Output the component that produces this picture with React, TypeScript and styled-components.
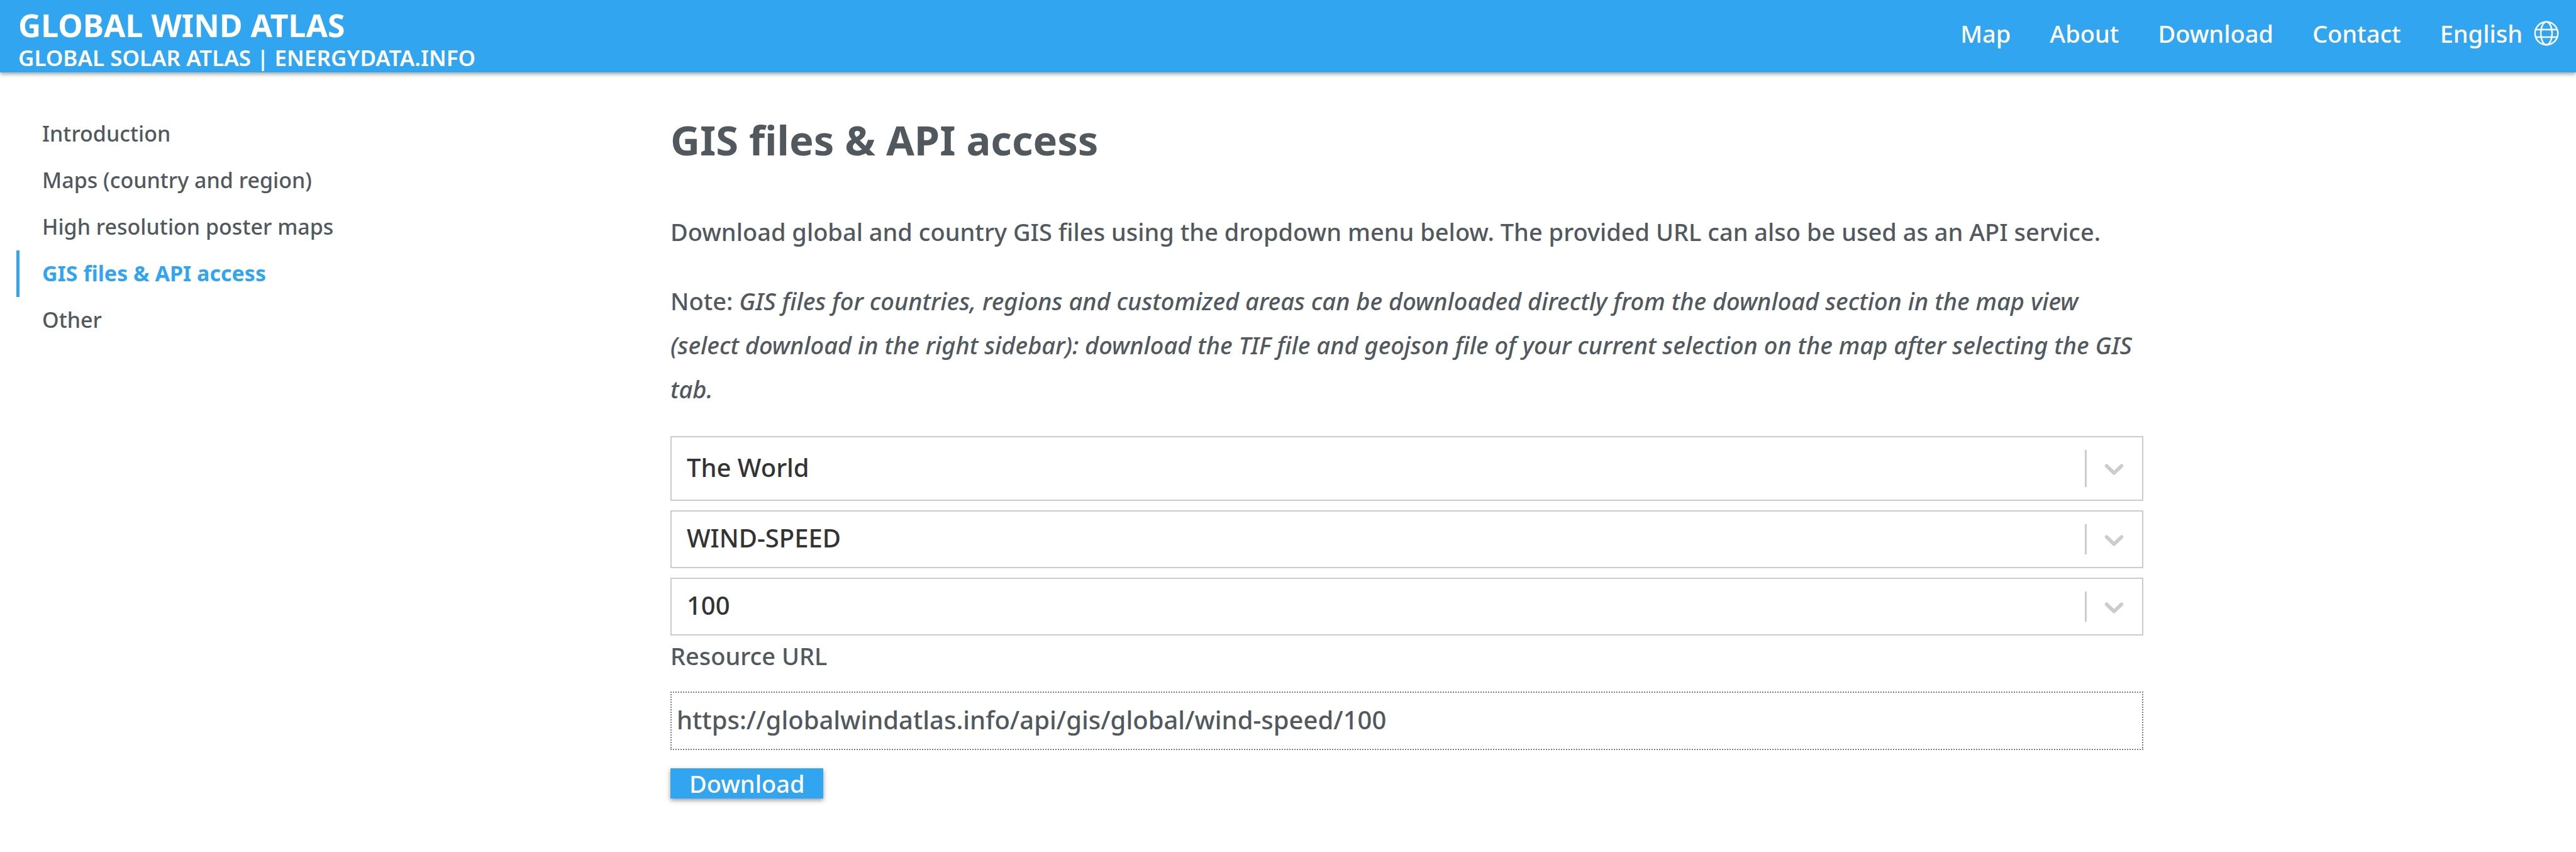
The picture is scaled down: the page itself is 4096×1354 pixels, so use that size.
import React, { useState } from 'react';
import styled, { createGlobalStyle } from 'styled-components';

const color = {
  brand: '#32a5f1',
  text: '#51595e',
  input: '#333333',
  line: '#cccccc',
  dotted: '#7d7d7d',
};

const GlobalStyle = createGlobalStyle`
  *, *::before, *::after { box-sizing: border-box; }
  body {
    margin: 0;
    background: #ffffff;
    color: ${color.text};
    font-family: "Noto Sans", "Open Sans", sans-serif;
    font-size: 38px;
    font-weight: 500;
    line-height: 70px;
  }
  a { color: inherit; text-decoration: none; }
`;

const Header = styled.header`
  display: flex;
  justify-content: space-between;
  align-items: flex-start;
  padding: 12px 27px 0 29px;
  background: ${color.brand};
  color: #ffffff;
  box-shadow: 0 3px 6px rgba(0, 0, 0, 0.35);
`;

const Brand = styled.div`
  display: flex;
  flex-direction: column;
`;

const SiteTitle = styled.a`
  font-size: 50px;
  font-weight: 700;
  line-height: 56px;
`;

const SisterSites = styled.div`
  font-size: 35px;
  font-weight: 600;
  line-height: 47px;
`;

const TopNav = styled.nav`
  display: flex;
  align-items: center;
  gap: 62px;
  padding-top: 13px;
  line-height: 56px;
`;

const LanguageButton = styled.button`
  display: flex;
  align-items: center;
  gap: 18px;
  padding: 0;
  border: 0;
  background: none;
  color: inherit;
  font: inherit;
  cursor: pointer;
`;

const Layout = styled.div`
  display: grid;
  grid-template-columns: 26% 57.2%;
  align-items: start;
`;

const Sidebar = styled.nav`
  display: flex;
  flex-direction: column;
  padding: 61px 0 0 26px;
`;

const SidebarLink = styled.a<{ $active: boolean }>`
  padding: 0 0 2px 36px;
  border-left: 5px solid ${p => (p.$active ? color.brand : 'transparent')};
  color: ${p => (p.$active ? color.brand : color.text)};
  font-size: 34px;
  font-weight: ${p => (p.$active ? 700 : 500)};
  line-height: 72px;
`;

const Main = styled.main`
  padding: 59px 0 85px 1px;
`;

const Heading = styled.h1`
  margin: 0 0 63px;
  font-size: 65px;
  font-weight: 700;
  line-height: 96px;
`;

const Paragraph = styled.p`
  margin: 0 0 40px;
`;

const Form = styled.form`
  display: flex;
  flex-direction: column;
  align-items: stretch;
`;

const SelectBox = styled.div<{ $tall?: boolean }>`
  display: grid;
  grid-template-columns: 1fr 3px 88px;
  grid-template-rows: ${p => (p.$tall ? 99 : 88)}px;
  margin-bottom: 15px;
  border: 2px solid ${color.line};

  &:last-of-type { margin-bottom: 0; }
`;

const Select = styled.select`
  grid-area: 1 / 1 / 2 / 4;
  width: 100%;
  height: 100%;
  padding: 0 118px 4px 24px;
  border: 0;
  border-radius: 0;
  outline: 0;
  background: transparent;
  color: ${color.input};
  font: inherit;
  font-size: 40px;
  appearance: none;
`;

const Separator = styled.span`
  grid-area: 1 / 2;
  margin: 20px 0;
  background: ${color.line};
  pointer-events: none;
`;

const Indicator = styled.span`
  grid-area: 1 / 3;
  display: flex;
  align-items: center;
  justify-content: center;
  color: ${color.line};
  pointer-events: none;
`;

const UrlLabel = styled.label`
  margin-bottom: 25px;
  line-height: 64px;
`;

const dots = (angle: string) =>
  `repeating-linear-gradient(${angle}, ${color.dotted} 0 2px, transparent 2px 4px)`;

const UrlInput = styled.input`
  width: 100%;
  height: 93px;
  padding: 0 10px 4px;
  border: 0;
  outline: 0;
  background:
    ${dots('90deg')} top / 100% 2px no-repeat,
    ${dots('90deg')} bottom / 100% 2px no-repeat,
    ${dots('180deg')} left / 2px 100% no-repeat,
    ${dots('180deg')} right / 2px 100% no-repeat;
  color: ${color.text};
  font: inherit;
  font-size: 40px;
`;

const DownloadButton = styled.button`
  align-self: flex-start;
  margin-top: 29px;
  padding: 0 30px;
  border: 0;
  background: ${color.brand};
  box-shadow: 0 3px 7px rgba(0, 0, 0, 0.4);
  color: #ffffff;
  font: inherit;
  line-height: 48px;
  cursor: pointer;
`;

const GlobeIcon = () => (
  <svg width="40" height="40" viewBox="0 0 40 40" fill="none" stroke="currentColor" strokeWidth="2.4" aria-hidden="true">
    <circle cx="20" cy="20" r="18.2" />
    <ellipse cx="20" cy="20" rx="9" ry="18.2" />
    <path d="M3 14h34M3 26h34" />
  </svg>
);

const ChevronIcon = () => (
  <svg width="51" height="51" viewBox="0 0 20 20" fill="currentColor" aria-hidden="true">
    <path d="M4.516 7.548c0.436-0.446 1.043-0.481 1.576 0l3.908 3.747 3.908-3.747c0.533-0.481 1.141-0.446 1.574 0 0.436 0.445 0.408 1.197 0 1.615-0.406 0.418-4.695 4.502-4.695 4.502-0.217 0.223-0.502 0.335-0.787 0.335s-0.57-0.112-0.789-0.335c0 0-4.287-4.084-4.695-4.502s-0.436-1.17 0-1.615z" />
  </svg>
);

const navItems = ['Map', 'About', 'Download', 'Contact'];

const sections = [
  'Introduction',
  'Maps (country and region)',
  'High resolution poster maps',
  'GIS files & API access',
  'Other',
];

type FieldProps = { label: string; options: string[]; tall?: boolean };

const SelectField = ({ label, options, tall }: FieldProps) => (
  <SelectBox $tall={tall}>
    <Select aria-label={label} defaultValue={options[0]}>
      {options.map(o => (
        <option key={o}>{o}</option>
      ))}
    </Select>
    <Separator />
    <Indicator>
      <ChevronIcon />
    </Indicator>
  </SelectBox>
);

export default function App() {
  const [active, setActive] = useState('GIS files & API access');

  return (
    <>
      <GlobalStyle />
      <Header>
        <Brand>
          <SiteTitle href="#home">GLOBAL WIND ATLAS</SiteTitle>
          <SisterSites>
            <a href="#solar">GLOBAL SOLAR ATLAS</a> | <a href="#energydata">ENERGYDATA.INFO</a>
          </SisterSites>
        </Brand>
        <TopNav>
          {navItems.map(item => (
            <a key={item} href={`#${item.toLowerCase()}`}>{item}</a>
          ))}
          <LanguageButton type="button">
            English
            <GlobeIcon />
          </LanguageButton>
        </TopNav>
      </Header>
      <Layout>
        <Sidebar>
          {sections.map(s => (
            <SidebarLink key={s} href="#section" $active={s === active} onClick={() => setActive(s)}>
              {s}
            </SidebarLink>
          ))}
        </Sidebar>
        <Main>
          <Heading>GIS files &amp; API access</Heading>
          <Paragraph>
            Download global and country GIS files using the dropdown menu below. The provided URL can also be used as an API service.
          </Paragraph>
          <Paragraph>
            Note:{' '}
            <em>
              GIS files for countries, regions and customized areas can be downloaded directly from the download section in the map view (select download in the right sidebar): download the TIF file and geojson file of your current selection on the map after selecting the GIS tab.
            </em>
          </Paragraph>
          <Form onSubmit={e => e.preventDefault()}>
            <SelectField label="Area" options={['The World']} tall />
            <SelectField label="Layer" options={['WIND-SPEED']} />
            <SelectField label="Height" options={['100']} />
            <UrlLabel htmlFor="resource-url">Resource URL</UrlLabel>
            <UrlInput
              id="resource-url"
              readOnly
              value="https://globalwindatlas.info/api/gis/global/wind-speed/100"
            />
            <DownloadButton type="submit">Download</DownloadButton>
          </Form>
        </Main>
      </Layout>
    </>
  );
}
